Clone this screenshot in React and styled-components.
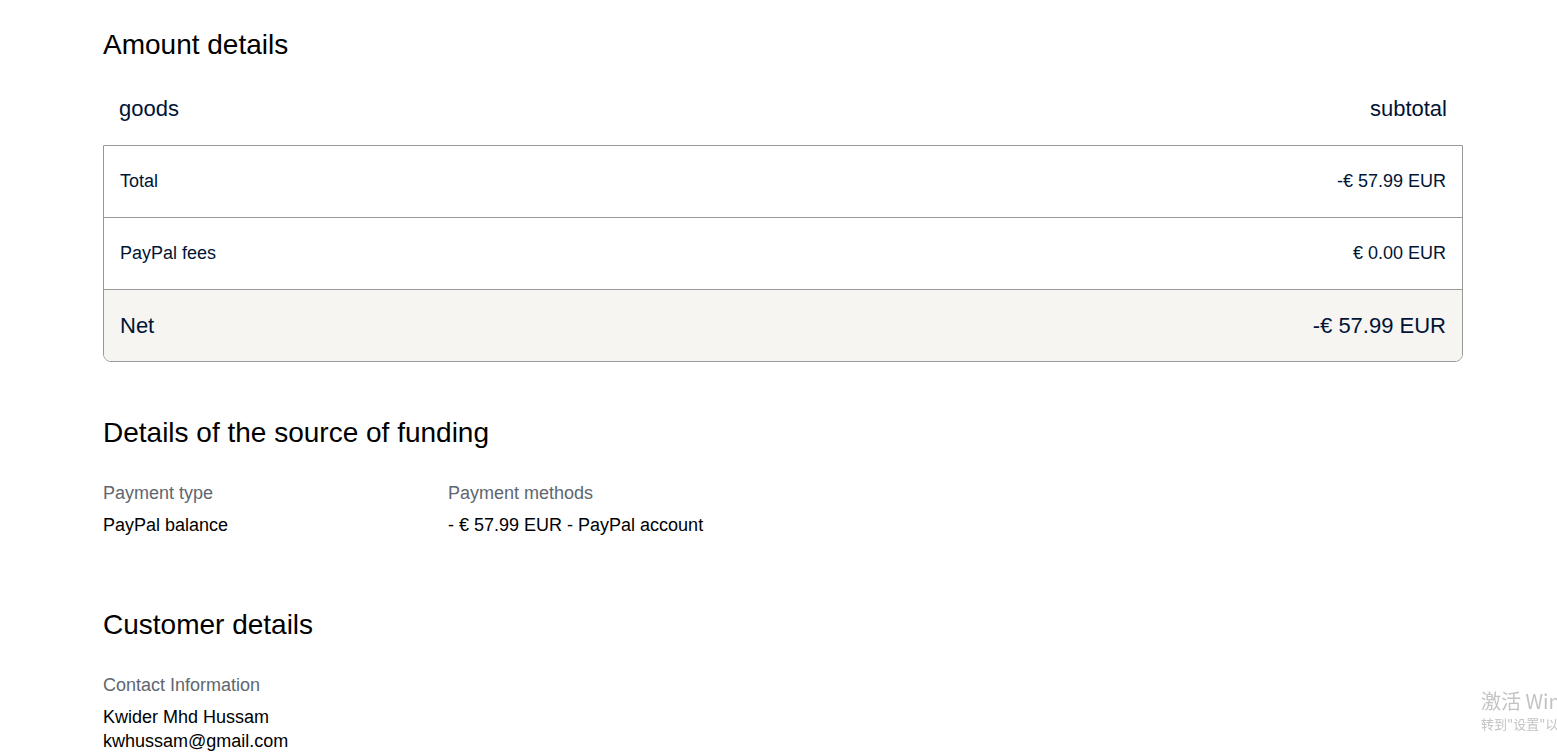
import React from 'react'
import styled, { createGlobalStyle } from 'styled-components'

const Global = createGlobalStyle`
  html, body {
    margin: 0;
    padding: 0;
    background: #fff;
    overflow: hidden;
  }
  body {
    font-family: "Liberation Sans", Arial, sans-serif;
  }
`

const Page = styled.main`
  position: relative;
  width: 1360px;
  margin-left: 103px;
  padding-top: 29px;
  height: 727px;
`

const Heading = styled.h2`
  margin: 0;
  font-size: 28px;
  line-height: 32px;
  font-weight: 400;
  color: #000;
`

const Section = styled.section`
  margin-top: ${p => p.$gap || 0}px;
`

const HeaderRow = styled.div`
  display: flex;
  justify-content: space-between;
  align-items: center;
  height: 72px;
  margin-top: 12px;
  padding: 0 16px;
  font-size: 22px;
  color: #001435;
`

const Table = styled.div`
  border: 1px solid #999;
  border-radius: 0 0 8px 8px;
  overflow: hidden;
`

const Row = styled.div`
  display: flex;
  justify-content: space-between;
  align-items: center;
  height: 71px;
  padding: 0 16px;
  font-size: ${p => (p.$net ? 22 : 18)}px;
  color: #001435;
  background: ${p => (p.$net ? '#f7f5f2' : '#fff')};
  & + & {
    border-top: 1px solid #999;
  }
`

const Fields = styled.div`
  display: grid;
  grid-template-columns: 345px 345px;
  margin-top: 32px;
`

const Field = styled.div`
  display: flex;
  flex-direction: column;
`

const Label = styled.div`
  font-size: 18px;
  line-height: 24px;
  color: #5e6670;
  margin-bottom: 8px;
`

const Value = styled.div`
  font-size: 18px;
  line-height: 24px;
  color: #000;
`

const Watermark = styled.div`
  position: fixed;
  left: 1481px;
  top: 688px;
  white-space: nowrap;
  color: #c3c3c3;
  font-family: "Noto Sans CJK SC", "Liberation Sans", sans-serif;
  pointer-events: none;
  div:first-child {
    font-size: 20px;
    line-height: 26px;
  }
  div:last-child {
    font-size: 13px;
    line-height: 20px;
  }
`

export default function App() {
  return (
    <>
      <Global />
      <Page>
        <Section>
          <Heading>Amount details</Heading>
          <HeaderRow>
            <span>goods</span>
            <span>subtotal</span>
          </HeaderRow>
          <Table>
            <Row>
              <span>Total</span>
              <span>-€ 57.99 EUR</span>
            </Row>
            <Row>
              <span>PayPal fees</span>
              <span>€ 0.00 EUR</span>
            </Row>
            <Row $net>
              <span>Net</span>
              <span>-€ 57.99 EUR</span>
            </Row>
          </Table>
        </Section>

        <Section $gap={55}>
          <Heading>Details of the source of funding</Heading>
          <Fields>
            <Field>
              <Label>Payment type</Label>
              <Value>PayPal balance</Value>
            </Field>
            <Field>
              <Label>Payment methods</Label>
              <Value>- € 57.99 EUR - PayPal account</Value>
            </Field>
          </Fields>
        </Section>

        <Section $gap={72}>
          <Heading>Customer details</Heading>
          <Fields>
            <Field>
              <Label>Contact Information</Label>
              <Value>Kwider Mhd Hussam</Value>
              <Value>kwhussam@gmail.com</Value>
            </Field>
          </Fields>
        </Section>
      </Page>
      <Watermark>
        <div>激活 Windows</div>
        <div>转到"设置"以激活 Windows。</div>
      </Watermark>
    </>
  )
}
